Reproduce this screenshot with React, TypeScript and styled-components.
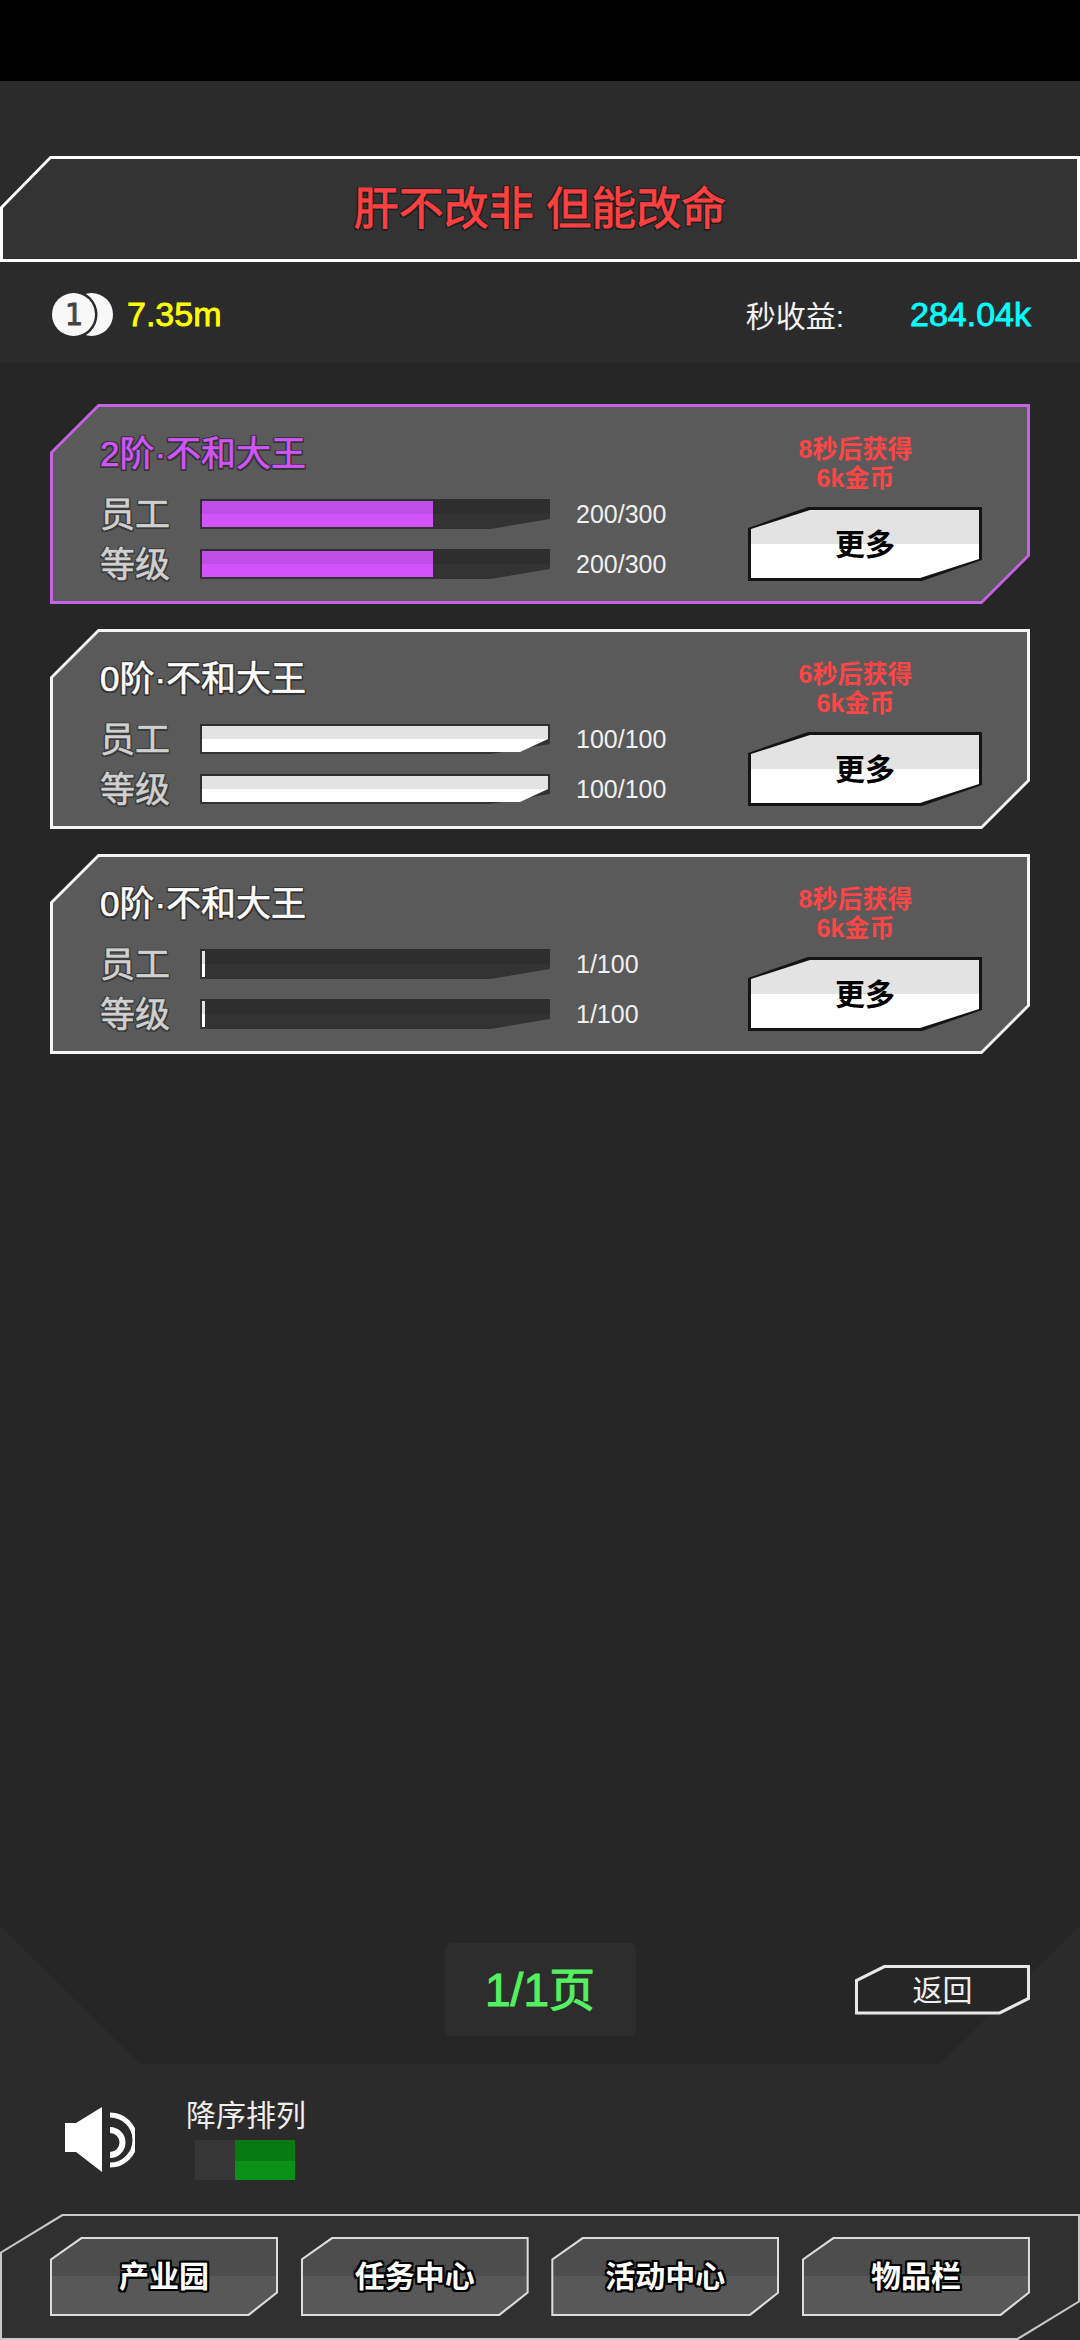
import styled, { createGlobalStyle } from 'styled-components';

const FONT = '"Liberation Sans", "Noto Sans CJK SC", sans-serif';

type Notch = { x: number; y: number };

// chamfered top-left / bottom-right corners, used by every panel in this game ui
const chamfer = (tl: Notch, br: Notch) =>
  `polygon(${tl.x}px 0, 100% 0, 100% calc(100% - ${br.y}px), calc(100% - ${br.x}px) 100%, 0 100%, 0 ${tl.y}px)`;

// fat game-style lettering: stroke in the text colour, dark outline round it
const outline = (color: string, w: number) =>
  `text-shadow: ${w}px 0 ${color}, -${w}px 0 ${color}, 0 ${w}px ${color}, 0 -${w}px ${color},
    ${w}px ${w}px ${color}, -${w}px ${w}px ${color}, ${w}px -${w}px ${color}, -${w}px -${w}px ${color};`;

const GlobalStyle = createGlobalStyle`
  html, body {
    margin: 0;
    padding: 0;
    background: #2b2b2b;
  }
  * {
    box-sizing: border-box;
  }
`;

const Page = styled.div`
  width: 1080px;
  height: 2340px;
  display: flex;
  flex-direction: column;
  overflow: hidden;
  background: #2b2b2b;
  font-family: ${FONT};
`;

const StatusBar = styled.div`
  height: 81px;
  flex: none;
  background: #000;
`;

const Banner = styled.div`
  position: relative;
  isolation: isolate;
  flex: none;
  height: 106px;
  margin-top: 75px;
  display: flex;
  align-items: center;
  justify-content: center;
  background: #fff;
  clip-path: ${chamfer({ x: 50, y: 51 }, { x: 0, y: 0 })};

  &::before {
    content: '';
    position: absolute;
    inset: 3px;
    z-index: -1;
    background: #333;
    clip-path: ${chamfer({ x: 48, y: 49 }, { x: 0, y: 0 })};
  }
`;

const BannerTitle = styled.div`
  padding-top: 1px;
  font-size: 45px;
  line-height: 60px;
  color: #ff4040;
  -webkit-text-stroke: 0.8px #ff4040;
  ${outline('#1e1e1e', 1.5)}
  white-space: pre;
`;

const Stats = styled.div`
  flex: none;
  height: 101px;
  padding: 3px 49px 0 52px;
  display: flex;
  align-items: center;
`;

const CoinIcon = styled.svg`
  width: 61px;
  height: 43px;
  flex: none;
`;

const Gold = styled.div`
  margin-left: 14px;
  font-size: 34px;
  color: #ffff00;
  -webkit-text-stroke: 0.8px #ffff00;
`;

const IncomeLabel = styled.div`
  margin-left: auto;
  margin-right: 66px;
  font-size: 30px;
  color: #f2f2f2;
`;

const Income = styled.div`
  font-size: 34px;
  color: #00ffff;
  -webkit-text-stroke: 0.8px #00ffff;
`;

const Main = styled.div`
  position: relative;
  isolation: isolate;
  flex: none;
  height: 1701px;
  padding: 41px 50px 28px;
  display: flex;
  flex-direction: column;
  justify-content: space-between;

  &::before {
    content: '';
    position: absolute;
    inset: 0;
    z-index: -1;
    background: #262626;
    clip-path: polygon(
      0 0,
      100% 0,
      100% 1562px,
      940px 100%,
      140px 100%,
      0 1562px
    );
  }
`;

const CardList = styled.div`
  display: flex;
  flex-direction: column;
  gap: 25px;
`;

const Card = styled.div<{ $accent: string }>`
  position: relative;
  isolation: isolate;
  height: 200px;
  padding: 0 48px 0 50px;
  display: flex;
  justify-content: space-between;
  background: ${(p) => p.$accent};
  clip-path: ${chamfer({ x: 48, y: 48 }, { x: 48, y: 48 })};

  &::before {
    content: '';
    position: absolute;
    inset: 3px;
    z-index: -1;
    background: #5a5a5a;
    clip-path: ${chamfer({ x: 46, y: 46 }, { x: 46, y: 46 })};
  }
`;

const CardLeft = styled.div`
  padding-top: 30px;
`;

const CardTitle = styled.div<{ $color: string }>`
  font-size: 35px;
  line-height: 40px;
  color: ${(p) => p.$color};
  -webkit-text-stroke: 0.6px ${(p) => p.$color};
  ${outline('#333', 1.5)}
`;

const Rows = styled.div`
  margin-top: 25px;
  display: flex;
  flex-direction: column;
  gap: 20px;
`;

const Row = styled.div`
  height: 30px;
  display: flex;
  align-items: center;
`;

const RowLabel = styled.div`
  width: 100px;
  flex: none;
  padding-top: 2px;
  font-size: 35px;
  line-height: 30px;
  color: #d0d0d0;
  -webkit-text-stroke: 0.6px #d0d0d0;
  ${outline('#3c3c3c', 1.5)}
`;

const Track = styled.div`
  position: relative;
  isolation: isolate;
  width: 350px;
  height: 30px;
  flex: none;
  padding: 2px;

  &::before {
    content: '';
    position: absolute;
    inset: 0;
    z-index: -1;
    background: linear-gradient(#2e2e2e 50%, #333 50%);
    clip-path: polygon(0 0, 100% 0, 100% 20px, 291px 100%, 0 100%);
  }
`;

const FillClip = styled.div`
  height: 26px;
  clip-path: polygon(0 0, 100% 0, 100% 13px, 318px 100%, 0 100%);
`;

const Fill = styled.div<{ $top: string; $bottom: string }>`
  height: 100%;
  background: linear-gradient(${(p) => p.$top} 50%, ${(p) => p.$bottom} 50%);
`;

const RowValue = styled.div`
  margin-left: 26px;
  font-size: 25px;
  color: #f0f0f0;
`;

const CardRight = styled.div`
  width: 234px;
  padding-top: 31px;
`;

const Reward = styled.div`
  padding-right: 19px;
  font-size: 25px;
  line-height: 29px;
  font-weight: bold;
  text-align: center;
  color: #ff4545;
`;

const MoreButton = styled.div`
  position: relative;
  isolation: isolate;
  height: 74px;
  margin-top: 14px;
  padding-bottom: 4px;
  display: flex;
  align-items: center;
  justify-content: center;
  font-size: 30px;
  font-weight: bold;
  color: #000;
  background: #141414;
  clip-path: ${chamfer({ x: 60, y: 21 }, { x: 60, y: 21 })};

  &::before {
    content: '';
    position: absolute;
    inset: 3px;
    z-index: -1;
    background: linear-gradient(#e3e3e3 50%, #fff 50%);
    clip-path: ${chamfer({ x: 59, y: 19 }, { x: 59, y: 19 })};
  }
`;

const PagerRow = styled.div`
  display: grid;
  grid-template-columns: 1fr 191px 1fr;
  align-items: center;
`;

const Pager = styled.div`
  grid-column: 2;
  height: 93px;
  padding-bottom: 8px;
  display: flex;
  align-items: center;
  justify-content: center;
  border-radius: 6px;
  background: #2d2d2d;
  font-size: 46px;
  color: #55f060;
  -webkit-text-stroke: 1px #55f060;
`;

const BackButton = styled.div`
  position: relative;
  isolation: isolate;
  justify-self: end;
  width: 175px;
  height: 50px;
  padding-bottom: 3px;
  display: flex;
  align-items: center;
  justify-content: center;
  font-size: 30px;
  color: #eee;
  background: #e8e8e8;
  clip-path: ${chamfer({ x: 30, y: 15 }, { x: 30, y: 15 })};

  &::before {
    content: '';
    position: absolute;
    inset: 3px;
    z-index: -1;
    background: #262626;
    clip-path: ${chamfer({ x: 28, y: 14 }, { x: 28, y: 14 })};
  }
`;

const SoundRow = styled.div`
  flex: none;
  height: 150px;
  padding-left: 65px;
  display: flex;
  align-items: flex-start;
`;

const SpeakerIcon = styled.svg`
  width: 70px;
  height: 65px;
  flex: none;
  margin-top: 43px;
`;

const SortBlock = styled.div`
  margin-left: 51px;
  margin-top: 32px;
`;

const SortLabel = styled.div`
  font-size: 30px;
  line-height: 40px;
  color: #eee;
`;

const Toggle = styled.div`
  width: 100px;
  height: 40px;
  margin-top: 4px;
  margin-left: 9px;
  display: flex;
`;

const ToggleOff = styled.div`
  width: 40px;
  background: #363636;
`;

const ToggleOn = styled.div`
  flex: 1;
  background: linear-gradient(#077a12 52%, #0a9016 52%);
`;

const BottomPanel = styled.div`
  position: relative;
  isolation: isolate;
  flex: none;
  height: 126px;
  padding: 23px 50px 0;
  display: grid;
  grid-template-columns: repeat(4, 228px);
  justify-content: space-between;
  align-items: start;
  background: #c8c8c8;
  clip-path: ${chamfer({ x: 62, y: 38 }, { x: 62, y: 38 })};

  &::before {
    content: '';
    position: absolute;
    inset: 2px;
    z-index: -1;
    background: #303030;
    clip-path: ${chamfer({ x: 61, y: 37 }, { x: 61, y: 37 })};
  }
`;

const NavButton = styled.div`
  position: relative;
  isolation: isolate;
  height: 79px;
  padding-bottom: 5px;
  display: flex;
  align-items: center;
  justify-content: center;
  font-size: 30px;
  font-weight: bold;
  color: #fff;
  ${outline('#000', 2)}
  background: #dcdcdc;
  clip-path: ${chamfer({ x: 31, y: 22 }, { x: 29, y: 23 })};

  &::before {
    content: '';
    position: absolute;
    inset: 2px;
    z-index: -1;
    background: linear-gradient(#4d4d4d 50%, #585858 50%);
    clip-path: ${chamfer({ x: 30, y: 21 }, { x: 28, y: 22 })};
  }
`;

const WHITE = { accent: '#f4f4f4', title: '#fff', top: '#e3e3e3', bottom: '#fff' };
const PURPLE = { accent: '#c562e6', title: '#d154fa', top: '#bf4ee6', bottom: '#d154fa' };

const CARDS = [
  { name: '2阶·不和大王', tone: PURPLE, staff: [200, 300], level: [200, 300], reward: '8秒后获得' },
  { name: '0阶·不和大王', tone: WHITE, staff: [100, 100], level: [100, 100], reward: '6秒后获得' },
  { name: '0阶·不和大王', tone: WHITE, staff: [1, 100], level: [1, 100], reward: '8秒后获得' },
];

const NAV = ['产业园', '任务中心', '活动中心', '物品栏'];

const StatRow = ({
  label,
  value,
  tone,
}: {
  label: string;
  value: number[];
  tone: typeof WHITE;
}) => (
  <Row>
    <RowLabel>{label}</RowLabel>
    <Track>
      <FillClip>
        <Fill
          $top={tone.top}
          $bottom={tone.bottom}
          style={{ width: `${(value[0] / value[1]) * 100}%` }}
        />
      </FillClip>
    </Track>
    <RowValue>
      {value[0]}/{value[1]}
    </RowValue>
  </Row>
);

const App = () => {
  return (
    <Page>
      <GlobalStyle />
      <StatusBar />
      <Banner>
        <BannerTitle>肝不改非 但能改命</BannerTitle>
      </Banner>
      <Stats>
        <CoinIcon viewBox="0 0 61 43">
          <circle cx="39.5" cy="21.5" r="21.5" fill="#f8f8f8" />
          <circle cx="21.5" cy="21.5" r="24" fill="#2b2b2b" />
          <circle cx="21.5" cy="21.5" r="21.5" fill="#f8f8f8" />
          <text
            x="21.5"
            y="32"
            fontSize="30"
            textAnchor="middle"
            fontFamily='"DejaVu Sans Mono", monospace'
            stroke="#444"
            strokeWidth="0.8"
            fill="#444"
          >
            1
          </text>
        </CoinIcon>
        <Gold>7.35m</Gold>
        <IncomeLabel>秒收益:</IncomeLabel>
        <Income>284.04k</Income>
      </Stats>
      <Main>
        <CardList>
          {CARDS.map((card, i) => (
            <Card key={i} $accent={card.tone.accent}>
              <CardLeft>
                <CardTitle $color={card.tone.title}>{card.name}</CardTitle>
                <Rows>
                  <StatRow label="员工" value={card.staff} tone={card.tone} />
                  <StatRow label="等级" value={card.level} tone={card.tone} />
                </Rows>
              </CardLeft>
              <CardRight>
                <Reward>
                  {card.reward}
                  <br />
                  6k金币
                </Reward>
                <MoreButton>更多</MoreButton>
              </CardRight>
            </Card>
          ))}
        </CardList>
        <PagerRow>
          <Pager>1/1页</Pager>
          <BackButton>返回</BackButton>
        </PagerRow>
      </Main>
      <SoundRow>
        <SpeakerIcon viewBox="0 0 70 65">
          <polygon points="0,16 11,16 37,0 37,65 11,45 0,45" fill="#fff" />
          <path d="M45 8 A25 25 0 0 1 45 58" fill="none" stroke="#fff" strokeWidth="5" />
          <path d="M45 23 A12.5 12.5 0 0 1 45 48" fill="none" stroke="#fff" strokeWidth="6" />
        </SpeakerIcon>
        <SortBlock>
          <SortLabel>降序排列</SortLabel>
          <Toggle>
            <ToggleOff />
            <ToggleOn />
          </Toggle>
        </SortBlock>
      </SoundRow>
      <BottomPanel>
        {NAV.map((item) => (
          <NavButton key={item}>{item}</NavButton>
        ))}
      </BottomPanel>
    </Page>
  );
};

export default App;
